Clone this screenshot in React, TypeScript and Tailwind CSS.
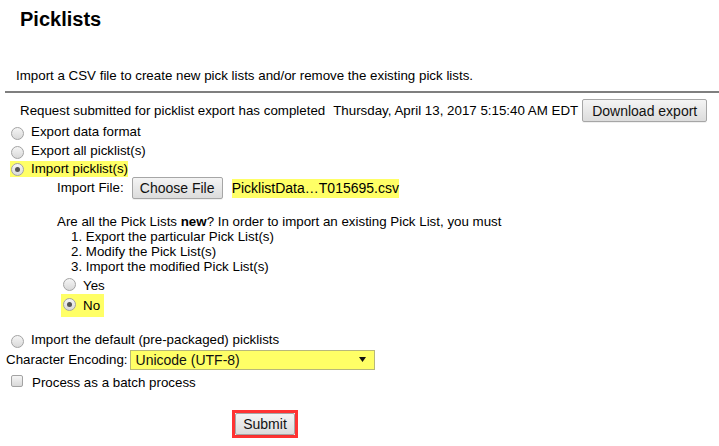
import React from "react";

const yellow = "bg-[#ffff66]";

function Radio({ checked = false, className = "" }: { checked?: boolean; className?: string }) {
  return (
    <span
      className={`flex h-[13px] w-[13px] shrink-0 items-center justify-center rounded-full border border-[#a3a3a3] bg-linear-to-b from-[#f5f5f5] to-[#d9d9d9] ${className}`}
    >
      {checked && <span className="h-[5px] w-[5px] rounded-full bg-[#555555]" />}
    </span>
  );
}

function Btn({ children, className = "" }: { children: React.ReactNode; className?: string }) {
  return (
    <button
      className={`flex shrink-0 items-center justify-center rounded-[2px] border border-[#a6a6a6] bg-linear-to-b from-[#f4f4f4] to-[#dcdcdc] text-[14px] leading-none text-[#111] shadow-[0_1px_0_rgba(0,0,0,0.06)] ${className}`}
    >
      {children}
    </button>
  );
}

export default function App() {
  return (
    <div className="h-[446px] w-[719px] overflow-hidden bg-white font-['Liberation_Sans',Arial,sans-serif] text-[13.33px] leading-[16px] text-black">
      {/* Header */}
      <h1 className="pl-[20px] pt-[8px] text-[20px] font-bold leading-[23px]">Picklists</h1>
      <p className="mt-[37px] pl-[16px]">
        Import a CSV file to create new pick lists and/or remove the existing pick lists.
      </p>
      <div className="ml-[5px] mt-[7px] h-[2px] bg-[#7f7f7f]" />

      {/* Export status */}
      <div className="mt-[6px] flex h-[23px] items-center pl-[20px]">
        <span className="whitespace-nowrap">Request submitted for picklist export has completed</span>
        <span className="ml-[8px] whitespace-nowrap">Thursday, April 13, 2017 5:15:40 AM EDT</span>
        <Btn className="ml-[4px] h-[23px] w-[125px]">Download export</Btn>
      </div>

      {/* Mode radios */}
      <div className="flex h-[19px] items-center pl-[11px]">
        <Radio className="mt-[3px]" />
        <span className="ml-[7px]">Export data format</span>
      </div>
      <div className="flex h-[19px] items-center pl-[11px]">
        <Radio className="mt-[3px]" />
        <span className="ml-[7px]">Export all picklist(s)</span>
      </div>
      <div className="flex h-[17px] items-center pl-[10px]">
        <span className={`flex h-[16px] items-center pl-[1px] ${yellow}`}>
          <Radio checked className="mt-[2px]" />
          <span className="ml-[7px]">Import picklist(s)</span>
        </span>
      </div>

      {/* Import file */}
      <div className="flex h-[22px] items-center">
        <span className="pl-[57px]">Import File:</span>
        <Btn className="ml-[8px] h-[22px] w-[91px]">Choose File</Btn>
        <span className={`ml-[9px] text-[14px] leading-[19px] ${yellow}`}>PicklistData…T015695.csv</span>
      </div>

      <div className="mt-[15px] pl-[57px] leading-[15px]">
        <div>
          Are all the Pick Lists <b>new</b>? In order to import an existing Pick List, you must
        </div>
        <div className="pl-[14px]">1. Export the particular Pick List(s)</div>
        <div className="pl-[14px]">2. Modify the Pick List(s)</div>
        <div className="pl-[14px]">3. Import the modified Pick List(s)</div>
      </div>

      <div className="mt-[4px] flex h-[16px] items-start pl-[63px]">
        <Radio />
        <span className="ml-[7px]">Yes</span>
      </div>
      <div className="flex h-[23px] pl-[61px]">
        <span className={`flex h-[23px] items-start pl-[2px] pr-[4px] ${yellow}`}>
          <Radio checked className="mt-[4px]" />
          <span className="ml-[7px] leading-[23px]">No</span>
        </span>
      </div>

      <div className="mt-[13px] flex h-[19px] items-start pl-[11px]">
        <Radio className="mt-[5px]" />
        <span className="ml-[7px] leading-[19px]">Import the default (pre-packaged) picklists</span>
      </div>

      {/* Encoding */}
      <div className="flex h-[21px] items-center pl-[6px]">
        <span>Character Encoding:</span>
        <div
          className={`ml-[2px] flex h-[20px] w-[245px] items-center border border-[#b8b87a] pl-[5px] pr-[8px] text-[14px] text-[#111] ${yellow}`}
        >
          <span>Unicode (UTF-8)</span>
          <svg className="ml-auto" width="7" height="5" viewBox="0 0 7 5">
            <polygon points="0,0 7,0 3.5,5" fill="#111" />
          </svg>
        </div>
      </div>

      <div className="flex items-start pl-[11px] pt-[5px]">
        <span className="h-[12px] w-[12px] shrink-0 rounded-[2px] border border-[#a3a3a3] bg-linear-to-b from-[#f5f5f5] to-[#d9d9d9]" />
        <span className="ml-[9px]">Process as a batch process</span>
      </div>

      {/* Submit */}
      <div className="ml-[232px] mt-[19px] w-fit border-[3px] border-[#ff3333]">
        <Btn className="h-[22px] w-[60px]">Submit</Btn>
      </div>
    </div>
  );
}
